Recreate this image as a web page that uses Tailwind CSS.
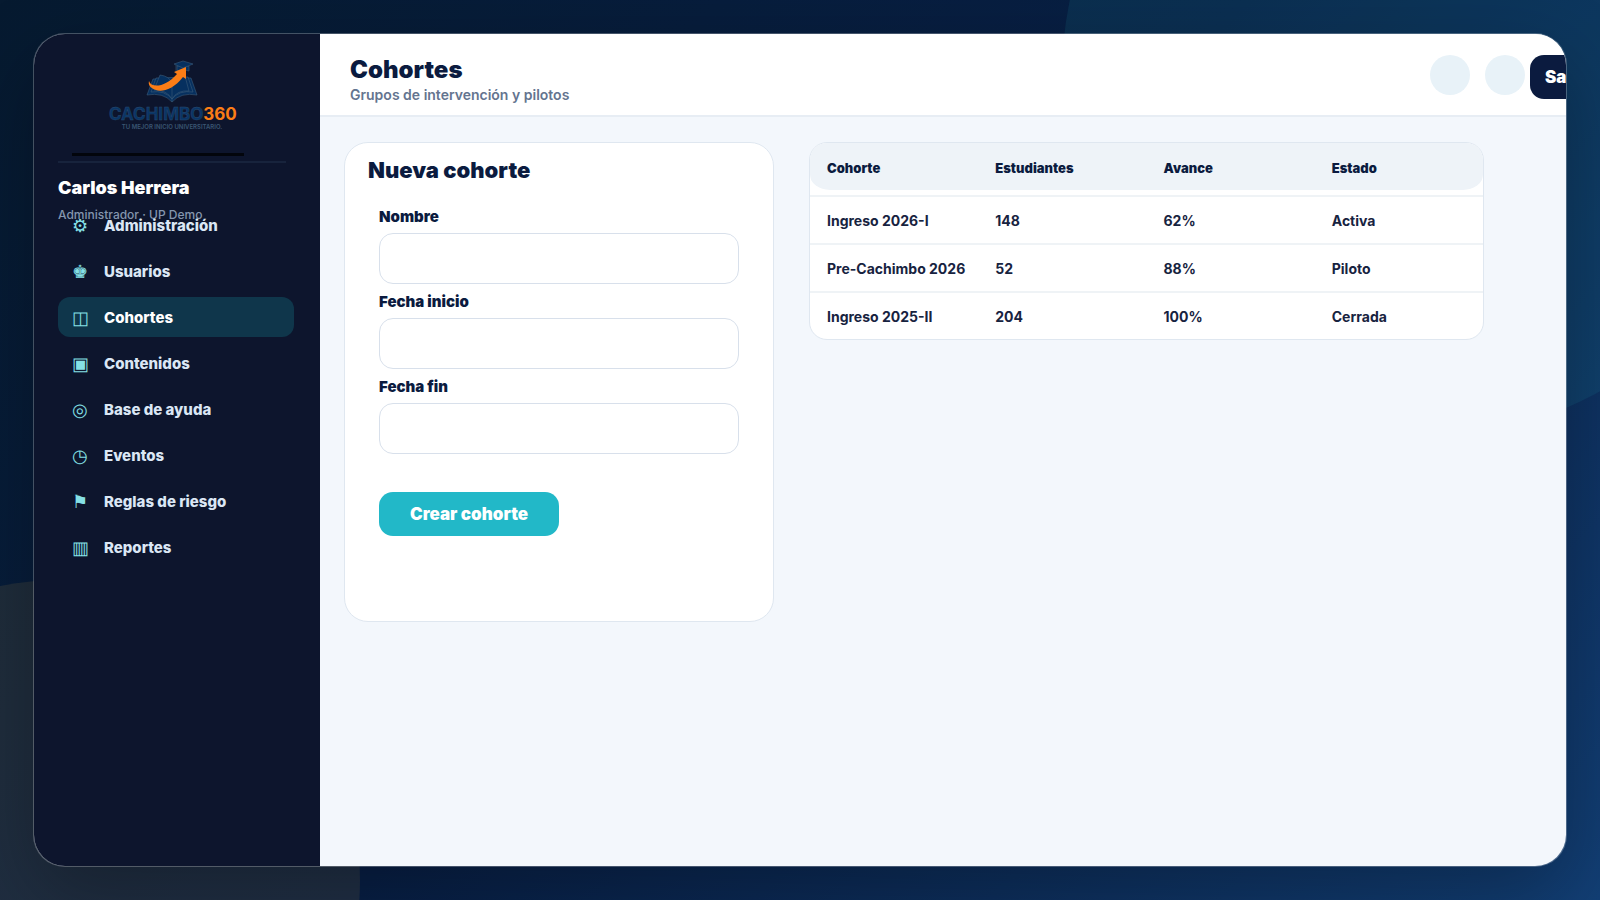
<!DOCTYPE html>
<html lang="es">
<head>
  <meta charset="UTF-8" />
  <meta name="viewport" content="width=device-width, initial-scale=1.0" />
  <title>Cohortes | Cachimbo360</title>
  <script src="https://cdn.jsdelivr.net/npm/@tailwindcss/browser@4"></script>
</head>
<body class="relative h-screen bg-linear-135 from-[#061a30] via-[#081f45] to-[#123f75] p-[33px] font-['Inter',sans-serif] text-[#0b1b3f]">

  <!-- Fondo -->
  <div class="absolute inset-0 overflow-hidden">
    <div class="absolute -top-[287px] -right-[186px] size-[724px] rounded-full bg-[#22b8c0]/11"></div>
    <div class="absolute -bottom-[280px] -left-[240px] size-[600px] rounded-full bg-[#d0a848]/12"></div>
  </div>

  <div class="relative flex h-full overflow-hidden rounded-[32px] border border-white/25 bg-[#f3f7fc] bg-clip-padding shadow-[0_28px_80px_rgba(0,0,0,0.28)]">

    <aside class="flex w-[286px] shrink-0 flex-col bg-[#0d152d] px-6">
      <div class="mr-2.5 flex h-[129px] shrink-0 flex-col items-center border-b-2 border-[#17233c] pt-[25px]">
        <svg class="h-[82px] w-[130px] shrink-0" viewBox="0 0 130 82" role="img" aria-label="Cachimbo360">
          <g fill="#06305f" stroke="#3a5a78" stroke-width="0.6" stroke-linejoin="round">
            <path d="M46 20 L40 36 Q56 33 65 43 Q74 33 90 36 L84 19 L80 19 L65 38 L50 20 Z" />
            <path d="M49 19 L44 33 Q58 31 65 40 Q72 31 86 33 L81 18 Z" />
            <path d="M53 16 Q62 17 65 24 Q70 18 78 17 L82 32 Q70 31 65 40 Q60 31 47 31 Z" />
            <path d="M65 24 L65 43" />
            <path d="M70 7 L70 12 Q76 9 82 12 L82 7 Z" />
            <path d="M67 5 L76 2 L86 5 L76 9 Z" />
            <path d="M69 6 L69 13" />
          </g>
          <path fill="#fb7d16" d="M42 22 C44 29 58 29 70 15 L67 13 L79 8 L79 20 L76 18 C66 31 55 33 49 31 C43 29 41 26 42 22 Z" />
          <text x="2" y="61" font-size="17" font-weight="700"><tspan fill="#0a3566" stroke="#2c4c6d" stroke-width="0.4">CACHIMBO</tspan><tspan fill="#fb7d16">360</tspan></text>
          <text x="65" y="70" text-anchor="middle" font-size="6" font-weight="600" fill="#3a5672">TU MEJOR INICIO UNIVERSITARIO.</text>
        </svg>
        <div class="mt-3 mr-7 h-[3px] w-[172px] shrink-0 bg-[#02050c]"></div>
      </div>

      <div class="h-[42px] shrink-0 pt-[11px]">
        <p class="text-lg leading-7 font-black text-white">Carlos Herrera</p>
        <p class="mt-[3px] text-xs leading-5 font-medium text-[#8495ae]">Administrador · UP Demo</p>
      </div>

      <nav class="mr-0.5 flex flex-col gap-1.5 text-[15px] font-extrabold text-[#dbe7f5]">
        <a href="#" class="flex h-10 items-center rounded-xl px-3.5 pt-0.5"><span class="w-8 text-lg font-normal text-[#85e0e6]">⚙</span>Administración</a>
        <a href="#" class="flex h-10 items-center rounded-xl px-3.5 pt-0.5"><span class="w-8 text-lg font-normal text-[#85e0e6]">♚</span>Usuarios</a>
        <a href="#" class="flex h-10 items-center rounded-xl bg-[#0f364b] px-3.5 pt-0.5 text-white"><span class="w-8 text-lg font-normal text-[#85e0e6]">◫</span>Cohortes</a>
        <a href="#" class="flex h-10 items-center rounded-xl px-3.5 pt-0.5"><span class="w-8 text-lg font-normal text-[#85e0e6]">▣</span>Contenidos</a>
        <a href="#" class="flex h-10 items-center rounded-xl px-3.5 pt-0.5"><span class="w-8 text-lg font-normal text-[#85e0e6]">◎</span>Base de ayuda</a>
        <a href="#" class="flex h-10 items-center rounded-xl px-3.5 pt-0.5"><span class="w-8 text-lg font-normal text-[#85e0e6]">◷</span>Eventos</a>
        <a href="#" class="flex h-10 items-center rounded-xl px-3.5 pt-0.5"><span class="w-8 text-lg font-normal text-[#85e0e6]">⚑</span>Reglas de riesgo</a>
        <a href="#" class="flex h-10 items-center rounded-xl px-3.5 pt-0.5"><span class="w-8 text-lg font-normal text-[#85e0e6]">▥</span>Reportes</a>
      </nav>
    </aside>

    <div class="min-w-0 flex-1">
      <header class="flex h-[83px] items-start justify-between border-b-2 border-[#e7edf4] bg-white pt-[21px] pl-[30px]">
        <div class="pt-px">
          <h1 class="text-2xl leading-7 font-black">Cohortes</h1>
          <p class="mt-px text-sm leading-5 font-semibold text-[#64748f]">Grupos de intervención y pilotos</p>
        </div>
        <!-- El botón sobresale del borde derecho -->
        <div class="-mr-11 flex shrink-0">
          <button type="button" aria-label="Notificaciones" class="mr-[15px] size-10 rounded-full bg-[#e8f2f8]"></button>
          <button type="button" aria-label="Perfil" class="mr-[5px] size-10 rounded-full bg-[#e8f2f8]"></button>
          <button type="button" class="h-11 w-20 rounded-[14px] bg-[#0b1b3f] px-[15px] pt-0.5 text-left text-[17px] font-black text-white">Salir</button>
        </div>
      </header>

      <main class="flex items-start gap-[35px] pt-[25px] pr-[82px] pl-6">
        <form class="w-[430px] shrink-0 rounded-[24px] border border-[#dfe7f0] bg-white px-[34px] pt-[13px] pb-[85px]">
          <h2 class="-ml-[11px] text-[22px] leading-7 font-black">Nueva cohorte</h2>

          <label for="nombre" class="mt-[21px] block text-[15px] leading-6 font-black">Nombre</label>
          <input type="text" id="nombre" class="mt-1 block h-[51px] w-full rounded-[14px] border border-[#d8e0eb] bg-white px-4" />

          <label for="inicio" class="mt-1.5 block text-[15px] leading-6 font-black">Fecha inicio</label>
          <input type="text" id="inicio" class="mt-1 block h-[51px] w-full rounded-[14px] border border-[#d8e0eb] bg-white px-4" />

          <label for="fin" class="mt-1.5 block text-[15px] leading-6 font-black">Fecha fin</label>
          <input type="text" id="fin" class="mt-1 block h-[51px] w-full rounded-[14px] border border-[#d8e0eb] bg-white px-4" />

          <button type="submit" class="mt-[38px] block h-11 w-[180px] rounded-[14px] bg-[#22b8c8] pt-0.5 text-[17px] font-black text-white">Crear cohorte</button>
        </form>

        <div class="min-w-0 flex-1 overflow-hidden rounded-[18px] border border-[#dfe7f0] bg-white">
          <table class="w-full table-fixed border-separate border-spacing-0 text-left text-sm font-bold whitespace-nowrap text-[#17233f]">
            <thead class="text-[13px] text-[#0b1b3f]">
              <tr class="h-[52px]">
                <th class="rounded-bl-[20px] border-b-[5px] border-transparent bg-[#eef3f8] bg-clip-padding px-[17px] pt-1 font-black">Cohorte</th>
                <th class="border-b-[5px] border-transparent bg-[#eef3f8] bg-clip-padding px-[17px] pt-1 font-black">Estudiantes</th>
                <th class="border-b-[5px] border-transparent bg-[#eef3f8] bg-clip-padding px-[17px] pt-1 font-black">Avance</th>
                <th class="rounded-br-[20px] border-b-[5px] border-transparent bg-[#eef3f8] bg-clip-padding px-[17px] pt-1 font-black">Estado</th>
              </tr>
            </thead>
            <tbody>
              <tr class="h-12">
                <td class="border-t-2 border-[#eff3f6] px-[17px] pt-0.5">Ingreso 2026-I</td>
                <td class="border-t-2 border-[#eff3f6] px-[17px] pt-0.5">148</td>
                <td class="border-t-2 border-[#eff3f6] px-[17px] pt-0.5">62%</td>
                <td class="border-t-2 border-[#eff3f6] px-[17px] pt-0.5">Activa</td>
              </tr>
              <tr class="h-12">
                <td class="border-t-2 border-[#eff3f6] px-[17px] pt-0.5">Pre-Cachimbo 2026</td>
                <td class="border-t-2 border-[#eff3f6] px-[17px] pt-0.5">52</td>
                <td class="border-t-2 border-[#eff3f6] px-[17px] pt-0.5">88%</td>
                <td class="border-t-2 border-[#eff3f6] px-[17px] pt-0.5">Piloto</td>
              </tr>
              <tr class="h-12">
                <td class="border-t-2 border-[#eff3f6] px-[17px] pt-0.5">Ingreso 2025-II</td>
                <td class="border-t-2 border-[#eff3f6] px-[17px] pt-0.5">204</td>
                <td class="border-t-2 border-[#eff3f6] px-[17px] pt-0.5">100%</td>
                <td class="border-t-2 border-[#eff3f6] px-[17px] pt-0.5">Cerrada</td>
              </tr>
            </tbody>
          </table>
        </div>
      </main>
    </div>
  </div>

</body>
</html>
